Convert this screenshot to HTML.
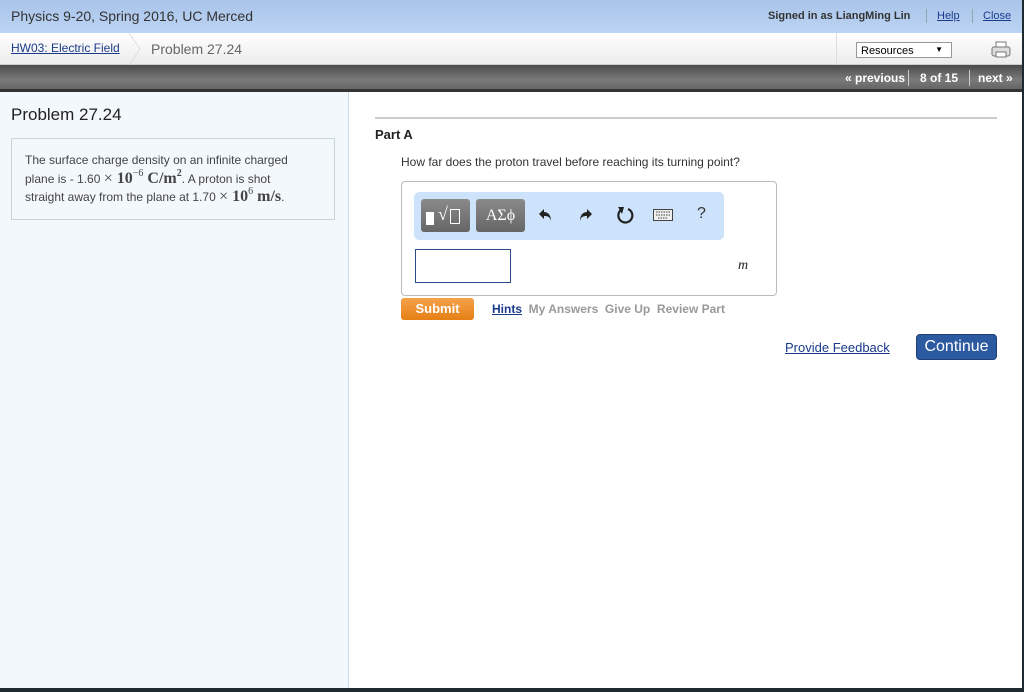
<!DOCTYPE html>
<html><head><style>
*{margin:0;padding:0;box-sizing:border-box}
body{width:1024px;height:692px;overflow:hidden;font-family:"Liberation Sans",Arial,sans-serif;background:#1e2a30;position:relative}
.abs{position:absolute}
#top{left:0;top:0;width:1022px;height:33px;background:linear-gradient(#a9c4ea,#bcd4f3)}
#crumb{left:0;top:33px;width:1022px;height:32px;background:linear-gradient(#fff,#ececec);border-bottom:1px solid #ccc}
#bar{left:0;top:65px;width:1022px;height:27px;background:linear-gradient(#4a4a4a,#7a7a7a 60%,#666);border-bottom:3px solid #333}
#left{left:0;top:92px;width:349px;height:596px;background:#f3f8fd;border-right:1px solid #c9d9e6}
#right{left:349px;top:92px;width:673px;height:596px;background:#fff}
a{color:#1a3a8c}
.mi{font-family:"Liberation Serif",serif;line-height:0}
sup{line-height:0;vertical-align:0;position:relative;top:-7px}
</style></head><body>
<div id="top" class="abs">
 <div class="abs" style="left:11px;top:8px;font-size:14px;color:#333">Physics 9-20, Spring 2016, UC Merced</div>
 <div class="abs" style="left:768px;top:10px;font-size:11px;color:#333;font-weight:bold">Signed in as LiangMing Lin</div>
 <div class="abs" style="left:926px;top:9px;width:1px;height:14px;background:#8aa"></div>
 <div class="abs" style="left:937px;top:10px;font-size:11px"><a href="#">Help</a></div>
 <div class="abs" style="left:972px;top:9px;width:1px;height:14px;background:#8aa"></div>
 <div class="abs" style="left:983px;top:10px;font-size:11px"><a href="#">Close</a></div>
</div>
<div id="crumb" class="abs">
 <div class="abs" style="left:11px;top:8px;font-size:12px"><a href="#">HW03: Electric Field</a></div>
 <svg class="abs" style="left:128px;top:0" width="14" height="32"><path d="M1 0 L12 16 L1 32" stroke="#ddd" fill="none"/></svg>
 <div class="abs" style="left:151px;top:8px;font-size:14px;color:#666">Problem 27.24</div>
 <div class="abs" style="left:836px;top:0;width:1px;height:32px;background:#ddd"></div>
 <div class="abs" style="left:856px;top:9px;width:96px;height:16px;border:1px solid #999;background:#fff;font-size:11px;padding:2px 4px;color:#000">Resources<span style="position:absolute;right:8px;top:2px;font-size:8px">▼</span></div>
 <svg class="abs" style="left:991px;top:8px" width="20" height="18"><rect x="5" y="1" width="10" height="6" fill="#fff" stroke="#777"/><rect x="1" y="6" width="18" height="9" rx="2" fill="#ddd" stroke="#777"/><rect x="5" y="11" width="10" height="5" fill="#fff" stroke="#777"/></svg>
</div>
<div id="bar" class="abs">
 <div class="abs" style="left:845px;top:6px;font-size:12px;color:#fff;font-weight:bold">« previous</div>
 <div class="abs" style="left:908px;top:5px;width:1px;height:16px;background:#ccc"></div>
 <div class="abs" style="left:920px;top:6px;font-size:12px;color:#fff;font-weight:bold">8 of 15</div>
 <div class="abs" style="left:969px;top:5px;width:1px;height:16px;background:#ccc"></div>
 <div class="abs" style="left:978px;top:6px;font-size:12px;color:#fff;font-weight:bold">next »</div>
</div>
<div id="left" class="abs">
 <div class="abs" style="left:11px;top:13px;font-size:17px;color:#222">Problem 27.24</div>
 <div class="abs" style="left:11px;top:46px;width:324px;height:82px;border:1px solid #c8d4dc;background:#f3f8fd;padding:12px 24px 0 13px;font-size:12px;line-height:18.5px;color:#444">The surface charge density on an infinite charged plane is - 1.60 <span class="mi" style="font-size:16px">× <b>10</b><sup style="font-size:10px">−6</sup> <b>C/m<sup style="font-size:10px">2</sup></b></span>. A proton is shot straight away from the plane at 1.70 <span class="mi" style="font-size:16px">× <b>10</b><sup style="font-size:10px">6</sup> <b>m/s</b></span>.</div>
</div>
<div id="right" class="abs">
 <div class="abs" style="left:26px;top:25px;width:622px;height:2px;background:#ccc"></div>
 <div class="abs" style="left:26px;top:35px;font-size:13px;font-weight:bold;color:#222">Part A</div>
 <div class="abs" style="left:52px;top:63px;font-size:12px;color:#333">How far does the proton travel before reaching its turning point?</div>
 <div class="abs" style="left:52px;top:89px;width:376px;height:115px;border:1px solid #bbb;border-radius:4px;background:#fff">
  <div class="abs" style="left:12px;top:10px;width:310px;height:48px;background:#cde3fb;border-radius:5px">
   <div class="abs" style="left:7px;top:7px;width:49px;height:33px;background:linear-gradient(#8a8a8a,#666);border-radius:3px"><div class="abs" style="left:5px;top:13px;width:8px;height:13px;background:#fff"></div><div class="abs" style="font-family:'Liberation Serif',serif;left:17px;top:5px;color:#fff;font-size:18px">√</div><div class="abs" style="left:29px;top:10px;width:10px;height:15px;border:1px solid #fff"></div></div>
   <div class="abs" style="font-family:'Liberation Serif',serif;left:62px;top:7px;width:49px;height:33px;background:linear-gradient(#8a8a8a,#666);border-radius:3px;color:#fff;font-size:16px;text-align:center;line-height:33px">ΑΣϕ</div>
   <svg class="abs" style="left:124px;top:15px" width="16" height="16"><path d="M6 2 L1 7 L6 12 L6 9 C10 9 12 10 13 14 C13 8 10 5 6 5Z" fill="#222"/></svg>
   <svg class="abs" style="left:163px;top:15px" width="16" height="16"><path d="M10 2 L15 7 L10 12 L10 9 C6 9 4 10 3 14 C3 8 6 5 10 5Z" fill="#222"/></svg>
   <svg class="abs" style="left:201px;top:13px" width="20" height="20"><path d="M13 4 A7 7 0 1 1 6 5" stroke="#222" stroke-width="2.2" fill="none"/><path d="M3 2 L9 2 L7 9Z" fill="#222"/></svg>
   <svg class="abs" style="left:239px;top:17px" width="20" height="12"><rect x="0.5" y="0.5" width="19" height="11" fill="#eee" stroke="#444"/><path d="M3 3h14M3 6h14M5 9h10" stroke="#444" stroke-dasharray="1.5 1"/></svg>
   <div class="abs" style="left:283px;top:13px;font-size:16px;color:#333">?</div>
  </div>
  <div class="abs" style="left:13px;top:67px;width:96px;height:34px;border:1px solid #2a4a8a"></div>
  <div class="abs" style="font-family:'Liberation Serif',serif;left:336px;top:76px;font-size:14px;font-style:italic;color:#222">m</div>
 </div>
 <div class="abs" style="left:52px;top:206px;width:73px;height:22px;background:linear-gradient(#f6a24a,#e57f14);border-radius:3px;color:#fff;font-weight:bold;font-size:13px;text-align:center;line-height:22px">Submit</div>
 <div class="abs" style="left:143px;top:210px;font-size:12px;font-weight:bold;color:#999"><a href="#" style="color:#1a3a8c">Hints</a>&nbsp;&nbsp;My Answers&nbsp;&nbsp;Give Up&nbsp;&nbsp;Review Part</div>
 <div class="abs" style="left:436px;top:248px;font-size:13px"><a href="#">Provide Feedback</a></div>
 <div class="abs" style="left:567px;top:242px;width:81px;height:26px;background:#2c5aa0;border:1px solid #1d3f78;border-radius:4px;color:#fff;font-size:16px;text-align:center;line-height:24px">Continue</div>
</div>
</body></html>
